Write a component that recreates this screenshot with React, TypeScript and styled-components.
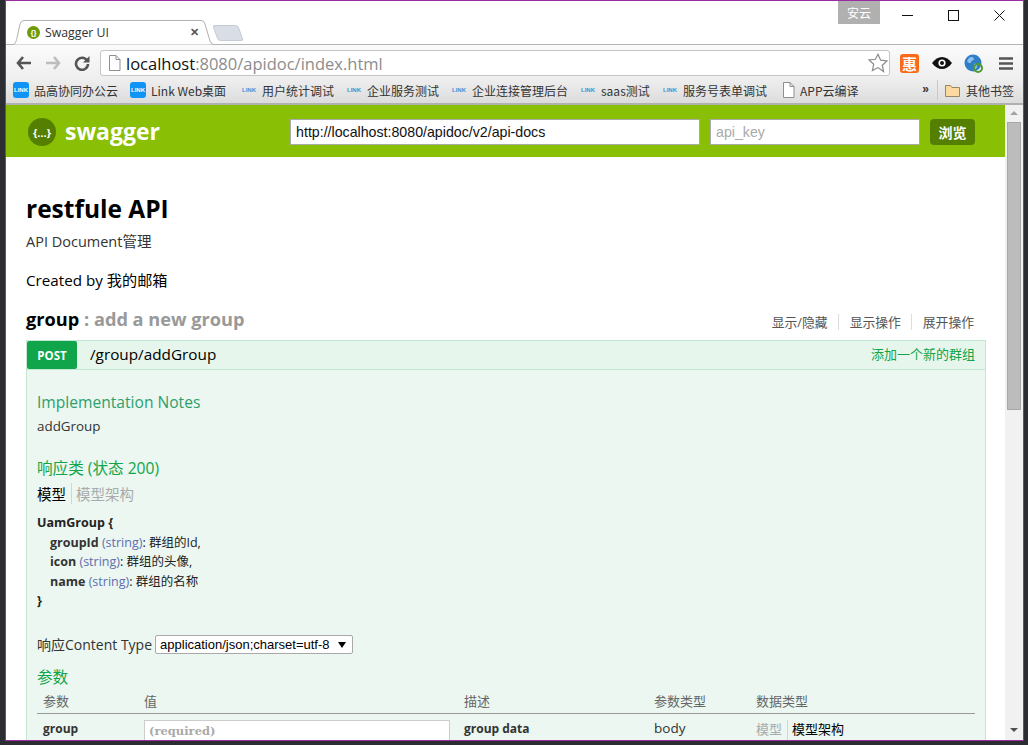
import React from 'react';
import styled, { createGlobalStyle } from 'styled-components';

const Global = createGlobalStyle`
	html, body { margin: 0; padding: 0; height: 745px; overflow: hidden; background: #2b2d33; }
	#root { height: 745px; }
	* { box-sizing: border-box; }
`;

const SANS = `'Open Sans', 'Noto Sans CJK SC', sans-serif`;
const ARIAL = `'Liberation Sans', 'Noto Sans CJK SC', sans-serif`;

const Desktop = styled.div`
	width: 1028px;
	height: 745px;
	padding-left: 5px;
	padding-right: 4px;
	padding-bottom: 4px;
	background: #2b2d33;
`;

const Win = styled.div`
	height: 100%;
	border: 1px solid #9a2ba0;
	display: flex;
	flex-direction: column;
	background: #fff;
	overflow: hidden;
`;

const TitleBar = styled.div`
	height: 44px;
	flex: none;
	background: #fff;
	position: relative;
	border-bottom: 1px solid #b4b4b4;
`;

const Tab = styled.div`
	position: absolute;
	left: 7px;
	top: 19px;
	width: 201px;
	height: 25px;
	z-index: 1;
	display: flex;
	align-items: center;
	padding-left: 14px;
	font: 12.3px ${SANS};
	color: #333;
	gap: 5px;
`;

const TabShape = styled.svg`
	position: absolute;
	left: 0;
	top: 0;
	z-index: -1;
`;

const TabIcon = styled.span`
	width: 13px;
	height: 13px;
	border-radius: 50%;
	background: #6f9a05;
	color: #fff;
	font: bold 8px ${ARIAL};
	display: flex;
	align-items: center;
	justify-content: center;
	flex: none;
`;

const TabClose = styled.span`
	margin-left: auto;
	margin-right: 15px;
	font: bold 11px ${ARIAL};
	color: #555;
`;

const NewTab = styled.div`
	position: absolute;
	left: 209px;
	top: 24px;
	width: 26px;
	height: 16px;
	background: #d8dde6;
	border: 1px solid #c6ccd6;
	border-radius: 3px;
	transform: skewX(20deg);
`;

const Badge = styled.div`
	position: absolute;
	left: 832px;
	top: 0;
	width: 42px;
	height: 23px;
	background: #b0b0b0;
	color: #fff;
	font: 12px 'Noto Sans CJK SC', sans-serif;
	text-align: center;
	line-height: 23px;
`;

const WinButtons = styled.div`
	position: absolute;
	right: 1px;
	top: 0;
	display: flex;
`;

const WinButton = styled.div`
	width: 46px;
	height: 29px;
	display: flex;
	align-items: center;
	justify-content: center;
`;

const Toolbar = styled.div`
	height: 33px;
	flex: none;
	background: linear-gradient(#fbfbfb, #efefef);
	display: flex;
	align-items: center;
	padding: 3px 0 0 3px;
`;

const NavButton = styled.div`
	width: 29px;
	height: 22px;
	display: flex;
	align-items: center;
	justify-content: center;
`;

const Omnibox = styled.div`
	width: 790px;
	height: 26px;
	margin-left: 4px;
	background: #fff;
	border: 1px solid #c4c4c4;
	border-radius: 3px;
	display: flex;
	align-items: center;
	padding: 0 0 0 7px;
	font: 16.5px ${SANS};
	color: #8c8c8c;
`;

const Host = styled.span`
	color: #111;
`;

const UrlText = styled.span`
	margin-left: 5px;
`;

const StarSlot = styled.span`
	margin-left: auto;
	display: flex;
`;

const Extensions = styled.div`
	display: flex;
	align-items: center;
	margin-left: 10px;
	gap: 11px;
`;

const Extension = styled.div`
	width: 21px;
	height: 20px;
	display: flex;
	align-items: center;
	justify-content: center;
`;

const HuiIcon = styled(Extension)`
	background: #f96a1a;
	border-radius: 3px;
	color: #fff;
	font: bold 15px 'Noto Sans CJK SC', sans-serif;
	width: 19px;
	height: 19px;
	margin-right: 1px;
`;

const Bookmarks = styled.div`
	height: 27px;
	flex: none;
	background: linear-gradient(#efefef, #dcdcdc);
	border-bottom: 2px solid #b0b0b0;
	display: flex;
	align-items: center;
	padding: 0 0 1px 7px;
	font: 12px 'Noto Sans CJK SC', ${SANS};
	color: #333;
`;

const Bookmark = styled.div<{ $w: number }>`
	width: ${(p) => p.$w}px;
	flex: none;
	display: flex;
	align-items: center;
	gap: 5px;
	white-space: nowrap;
`;

const LinkTile = styled.span`
	width: 16px;
	height: 16px;
	border-radius: 3px;
	background: #0f94f5;
	color: #fff;
	font: bold 6px ${ARIAL};
	display: flex;
	align-items: center;
	justify-content: center;
	flex: none;
`;

const LinkTag = styled.span`
	width: 16px;
	color: #3b93d8;
	font: bold 6px ${ARIAL};
	text-align: center;
	flex: none;
`;

const Chevron = styled.span`
	margin-left: auto;
	font: bold 12px ${ARIAL};
	padding-right: 8px;
	border-right: 1px solid #c9c9c9;
	height: 20px;
	line-height: 18px;
`;

const OtherMarks = styled.div`
	display: flex;
	align-items: center;
	gap: 6px;
	padding: 0 9px 0 7px;
	white-space: nowrap;
`;

const Viewport = styled.div`
	flex: 1;
	display: flex;
	min-height: 0;
`;

const Page = styled.div`
	flex: 1;
	min-width: 0;
	overflow: hidden;
	background: #fff;
`;

const Scrollbar = styled.div`
	width: 18px;
	flex: none;
	background: #f1f1f1;
	display: flex;
	flex-direction: column;
	align-items: center;
	padding-top: 6px;
`;

const ScrollThumb = styled.div`
	width: 14px;
	height: 288px;
	margin-top: 7px;
	background: #bcbcbc;
	border: 1px solid #a8a8a8;
`;

const ScrollArrow = styled.div<{ $down?: boolean }>`
	width: 0;
	height: 0;
	border-left: 4px solid transparent;
	border-right: 4px solid transparent;
	${(p) => (p.$down ? 'border-top: 4px solid #505050;' : 'border-bottom: 4px solid #a3a3a3;')}
	${(p) => (p.$down ? 'margin-top: auto; margin-bottom: 8px;' : '')}
`;

const Header = styled.div`
	height: 52px;
	background: #89bf04;
	display: flex;
	align-items: center;
	padding: 2px 30px 0 22px;
`;

const Logo = styled.div`
	display: flex;
	align-items: center;
	gap: 9px;
	color: #fff;
	font: bold 23px ${SANS};
	line-height: 28px;
`;

const LogoWord = styled.span`
	margin-top: -3px;
`;

const LogoMark = styled.span`
	width: 28px;
	height: 28px;
	border-radius: 50%;
	background: #547f00;
	color: #fff;
	font: bold 11px ${SANS};
	display: flex;
	align-items: center;
	justify-content: center;
	flex: none;
`;

const HeaderInput = styled.div<{ $w: number; $muted?: boolean }>`
	width: ${(p) => p.$w}px;
	height: 26px;
	background: #fff;
	border: 1px solid #aaa;
	font: 14.2px ${ARIAL};
	line-height: 24px;
	padding-left: 5px;
	color: ${(p) => (p.$muted ? '#aaa' : '#111')};
	margin-right: 10px;
	flex: none;
`;

const ExploreButton = styled.div`
	width: 46px;
	height: 26px;
	background: #547f00;
	border-radius: 4px;
	color: #fff;
	font: bold 14px 'Noto Sans CJK SC', sans-serif;
	display: flex;
	align-items: center;
	justify-content: center;
`;

const Spacer = styled.div`
	width: 130px;
	flex: none;
`;

const Content = styled.div`
	padding: 0 20px;
	font-family: ${SANS};
`;

const Title = styled.h1`
	margin: 35px 0 0;
	font: bold 24.5px/34px ${SANS};
	color: #000;
`;

const Description = styled.p`
	margin: 6px 0 0;
	font: 14.5px/20px ${SANS};
	color: #333;
`;

const CreatedBy = styled.p`
	margin: 18px 0 0;
	font: 15.2px/20px ${SANS};
	color: #000;
`;

const ResourceHead = styled.div`
	display: flex;
	align-items: center;
	justify-content: space-between;
	margin-top: 16px;
	height: 26px;
`;

const ResourceName = styled.h2`
	margin: 0;
	font: bold 18.2px/26px ${SANS};
	color: #000;
`;

const ResourceNote = styled.span`
	color: #999;
`;

const ResourceLinks = styled.div`
	display: flex;
	align-items: center;
	padding-right: 11px;
	font: 12.8px ${SANS};
	color: #555;
	margin-top: 6px;
`;

const ResourceLink = styled.span<{ $first?: boolean }>`
	padding: 0 10px 0 ${(p) => (p.$first ? '0' : '11px')};
	line-height: 16px;
	&:not(:last-child) { border-right: 1px solid #ddd; }
	&:last-child { padding-right: 0; }
`;

const Operation = styled.div`
	margin-top: 8px;
	border: 1px solid #c3e8d1;
	background: #ebf7f0;
	width: 960px;
`;

const OpHead = styled.div`
	height: 29px;
	background: #e7f6ec;
	border-bottom: 1px solid #c3e8d1;
	display: flex;
	align-items: center;
	padding-right: 10px;
`;

const Method = styled.span`
	width: 50px;
	height: 28px;
	background: #10a54a;
	border-radius: 2px;
	color: #fff;
	font: bold 11.5px ${SANS};
	display: flex;
	align-items: center;
	justify-content: center;
`;

const OpPath = styled.span`
	margin: 0 0 2px 13px;
	font: 15.3px ${SANS};
	color: #000;
`;

const OpSummary = styled.span`
	margin: 0 0 3px auto;
	font: 13px 'Noto Sans CJK SC', sans-serif;
	color: #10a54a;
`;

const OpBody = styled.div`
	padding: 20px 10px 0;
	background: #ebf7f0;
	height: 372px;
`;

const SectionTitle = styled.h4<{ $top: number }>`
	margin: ${(p) => p.$top}px 0 0;
	font: 15.6px/24px ${SANS};
	font-weight: 400;
	color: #10a54a;
`;

const NotesTitle = styled(SectionTitle)`
	color: #2d9f6c;
`;

const NoteText = styled.p`
	margin: 2px 0 0;
	font: 13.4px/20px ${SANS};
	color: #333;
`;

const SigTabs = styled.div`
	display: flex;
	align-items: center;
	margin-top: 3px;
	height: 20px;
	font: 14.5px 'Noto Sans CJK SC', sans-serif;
`;

const SigTab = styled.span<{ $active?: boolean }>`
	color: ${(p) => (p.$active ? '#000' : '#aaa')};
	&:first-child {
		padding-right: 5px;
		border-right: 1px solid #ccd8d2;
		margin-right: 4px;
	}
`;

const Model = styled.div`
	margin-top: 10px;
	font: 12.5px/19.5px ${SANS};
	color: #222;
`;

const ModelName = styled.div`
	font-weight: 700;
	color: #222;
`;

const ModelRow = styled.div`
	padding-left: 13px;
`;

const Prop = styled.b`
	color: #333;
`;

const PropType = styled.span`
	color: #5f6db0;
`;

const ContentType = styled.div`
	margin-top: 23px;
	display: flex;
	align-items: center;
	gap: 3px;
	font: 14px/22px ${SANS};
	color: #333;
`;

const Select = styled.div`
	width: 198px;
	height: 19px;
	background: #fff;
	border: 1px solid #a9a9a9;
	border-radius: 2px;
	display: flex;
	align-items: center;
	justify-content: space-between;
	padding: 0 6px 0 4px;
	font: 13px ${ARIAL};
	color: #000;
`;

const ParamGrid = styled.div`
	display: grid;
	grid-template-columns: 101px 320px 190px 102px 1fr;
	margin-top: 3px;
	width: 938px;
`;

const ParamHead = styled.div`
	height: 22px;
	padding-left: 6px;
	border-bottom: 1px solid #999;
	font: 13px/18px 'Noto Sans CJK SC', sans-serif;
	color: #666;
`;

const ParamCell = styled.div`
	padding: 6px 0 0 6px;
	font: 12px/18px ${SANS};
	color: #333;
`;

const ParamName = styled(ParamCell)`
	font-weight: 700;
`;

const ParamKind = styled(ParamCell)`
	padding-top: 5px;
	font-size: 13.5px;
`;

const ValueInput = styled.div`
	width: 306px;
	height: 24px;
	margin: 6px 0 0 6px;
	background: #fff;
	border: 1px solid #ccc;
	padding-left: 4px;
	font: bold 11.5px/20px 'DejaVu Serif', serif;
	color: #aaa;
`;

const TypeTabs = styled(ParamCell)`
	display: flex;
	padding-top: 6px;
	font: 13px/18px 'Noto Sans CJK SC', sans-serif;
`;

const Star = () => (
	<svg width="22" height="22" viewBox="0 0 24 24" fill="#fff" stroke="#8a8a8a" strokeWidth="1.300">
		<path d="M12 2.500l2.900 6.400 6.900.8-5.100 4.700 1.400 6.900L12 17l-6.100 3.300 1.400-6.900-5.100-4.700 6.900-.8z" />
	</svg>
);

const DocIcon = () => (
	<svg width="13" height="16" viewBox="0 0 13 16" fill="#fff" stroke="#8f8f8f">
		<path d="M1.500.5h6.500l4 4v11h-10.500zM8 .5v4h4" />
	</svg>
);

const marks = [
	{ kind: 'tile', text: '品高协同办公云', w: 117 },
	{ kind: 'tile', text: 'Link Web桌面', w: 111 },
	{ kind: 'tag', text: '用户统计调试', w: 105 },
	{ kind: 'tag', text: '企业服务测试', w: 105 },
	{ kind: 'tag', text: '企业连接管理后台', w: 129 },
	{ kind: 'tag', text: 'saas测试', w: 82 },
	{ kind: 'tag', text: '服务号表单调试', w: 120 },
];

const App = () => {
	return (
		<Desktop>
			<Global />
			<Win>
				<TitleBar>
					<NewTab />
					<Tab>
						<TabShape width="201" height="25" viewBox="0 0 201 25">
							<path
								d="M0 24.500C2 24.500 3 22 4 18L7 4Q8 .5 11 .5H188Q191 .5 192 4L197 21Q198 24.500 201 24.500z"
								fill="#fff"
							/>
							<path
								d="M0 24.500C2 24.500 3 22 4 18L7 4Q8 .5 11 .5H188Q191 .5 192 4L197 21Q198 24.500 201 24.500"
								fill="none"
								stroke="#b0b0b0"
							/>
						</TabShape>
						<TabIcon>{'{}'}</TabIcon>
						Swagger UI
						<TabClose>✕</TabClose>
					</Tab>
					<Badge>安云</Badge>
					<WinButtons>
						<WinButton>
							<svg width="11" height="11"><path d="M0 5.500h11" stroke="#111" /></svg>
						</WinButton>
						<WinButton>
							<svg width="11" height="11"><rect x=".5" y=".5" width="10" height="10" fill="none" stroke="#111" /></svg>
						</WinButton>
						<WinButton>
							<svg width="11" height="11"><path d="M.5.5l10 10M10.500.5l-10 10" stroke="#111" /></svg>
						</WinButton>
					</WinButtons>
				</TitleBar>
				<Toolbar>
					<NavButton>
						<svg width="16" height="14" viewBox="0 0 16 14"><path d="M7 1L2 7l5 6M2 7h13" fill="none" stroke="#555" strokeWidth="2.600" /></svg>
					</NavButton>
					<NavButton>
						<svg width="16" height="14" viewBox="0 0 16 14"><path d="M9 1l5 6-5 6M14 7H1" fill="none" stroke="#bdbdbd" strokeWidth="2.600" /></svg>
					</NavButton>
					<NavButton>
						<svg width="16" height="16" viewBox="0 0 16 16">
							<path d="M13 5.500A6 6 0 1 0 14 9" fill="none" stroke="#555" strokeWidth="2.600" />
							<path d="M15.500 1v6.500H9z" fill="#555" />
						</svg>
					</NavButton>
					<Omnibox>
						<DocIcon />
						<UrlText><Host>localhost</Host>:8080/apidoc/index.html</UrlText>
						<StarSlot><Star /></StarSlot>
					</Omnibox>
					<Extensions>
						<HuiIcon>惠</HuiIcon>
						<Extension>
							<svg width="20" height="12" viewBox="0 0 20 12">
								<path d="M0 6c3-4 6.500-6 10-6s7 2 10 6c-3 4-6.500 6-10 6S3 10 0 6z" fill="#111" />
								<circle cx="10" cy="6" r="3.600" fill="#fff" />
								<circle cx="10" cy="6" r="2" fill="#111" />
							</svg>
						</Extension>
						<Extension>
							<svg width="19" height="19" viewBox="0 0 19 19">
								<circle cx="9" cy="9" r="8.500" fill="#2f7fc8" />
								<path d="M5 4c2-2 5-1 5 1s-3 1-3 3-3 1-4-1zM10 10c2-1 4 0 3 3s-3 3-3 1z" fill="#8fc1ea" />
								<circle cx="14" cy="14" r="4" fill="none" stroke="#4d9a2f" strokeWidth="2" />
							</svg>
						</Extension>
						<Extension>
							<svg width="14" height="13" viewBox="0 0 14 13"><path d="M0 1.500h14M0 6.500h14M0 11.500h14" stroke="#555" strokeWidth="2.600" /></svg>
						</Extension>
					</Extensions>
				</Toolbar>
				<Bookmarks>
					{marks.map((m) => (
						<Bookmark key={m.text} $w={m.w}>
							{m.kind === 'tile' ? <LinkTile>LINK</LinkTile> : <LinkTag>LINK</LinkTag>}
							{m.text}
						</Bookmark>
					))}
					<Bookmark $w={110}>
						<DocIcon />
						APP云编译
					</Bookmark>
					<Chevron>»</Chevron>
					<OtherMarks>
						<svg width="15" height="13" viewBox="0 0 15 13">
							<path d="M.5 12.500V1.500h5l1.500 2h7.500v9z" fill="#fbd9a0" stroke="#9a8660" />
						</svg>
						其他书签
					</OtherMarks>
				</Bookmarks>
				<Viewport>
					<Page>
						<Header>
							<Logo>
								<LogoMark>{'{…}'}</LogoMark>
								<LogoWord>swagger</LogoWord>
							</Logo>
							<Spacer />
							<HeaderInput $w={410}>http://localhost:8080/apidoc/v2/api-docs</HeaderInput>
							<HeaderInput $muted $w={210}>api_key</HeaderInput>
							<ExploreButton>浏览</ExploreButton>
						</Header>
						<Content>
							<Title>restfule API</Title>
							<Description>API Document管理</Description>
							<CreatedBy>Created by 我的邮箱</CreatedBy>
							<ResourceHead>
								<ResourceName>group <ResourceNote>: add a new group</ResourceNote></ResourceName>
								<ResourceLinks>
									<ResourceLink $first>显示/隐藏</ResourceLink>
									<ResourceLink>显示操作</ResourceLink>
									<ResourceLink>展开操作</ResourceLink>
								</ResourceLinks>
							</ResourceHead>
							<Operation>
								<OpHead>
									<Method>POST</Method>
									<OpPath>/group/addGroup</OpPath>
									<OpSummary>添加一个新的群组</OpSummary>
								</OpHead>
								<OpBody>
									<NotesTitle $top={0}>Implementation Notes</NotesTitle>
									<NoteText>addGroup</NoteText>
									<SectionTitle $top={20}>响应类 (状态 200)</SectionTitle>
									<SigTabs>
										<SigTab $active>模型</SigTab>
										<SigTab>模型架构</SigTab>
									</SigTabs>
									<Model>
										<ModelName>UamGroup {'{'}</ModelName>
										<ModelRow><Prop>groupId</Prop> <PropType>(string)</PropType>: 群组的Id,</ModelRow>
										<ModelRow><Prop>icon</Prop> <PropType>(string)</PropType>: 群组的头像,</ModelRow>
										<ModelRow><Prop>name</Prop> <PropType>(string)</PropType>: 群组的名称</ModelRow>
										<ModelName>{'}'}</ModelName>
									</Model>
									<ContentType>
										响应Content Type
										<Select>
											application/json;charset=utf-8
											<svg width="8" height="6"><path d="M0 0h8L4 6z" fill="#000" /></svg>
										</Select>
									</ContentType>
									<SectionTitle $top={9}>参数</SectionTitle>
									<ParamGrid>
										<ParamHead>参数</ParamHead>
										<ParamHead>值</ParamHead>
										<ParamHead>描述</ParamHead>
										<ParamHead>参数类型</ParamHead>
										<ParamHead>数据类型</ParamHead>
										<ParamName>group</ParamName>
										<div><ValueInput>(required)</ValueInput></div>
										<ParamName>group data</ParamName>
										<ParamKind>body</ParamKind>
										<TypeTabs>
											<SigTab>模型</SigTab>
											<SigTab $active>模型架构</SigTab>
										</TypeTabs>
									</ParamGrid>
								</OpBody>
							</Operation>
						</Content>
					</Page>
					<Scrollbar>
						<ScrollArrow />
						<ScrollThumb />
						<ScrollArrow $down />
					</Scrollbar>
				</Viewport>
			</Win>
		</Desktop>
	);
};

export default App;
